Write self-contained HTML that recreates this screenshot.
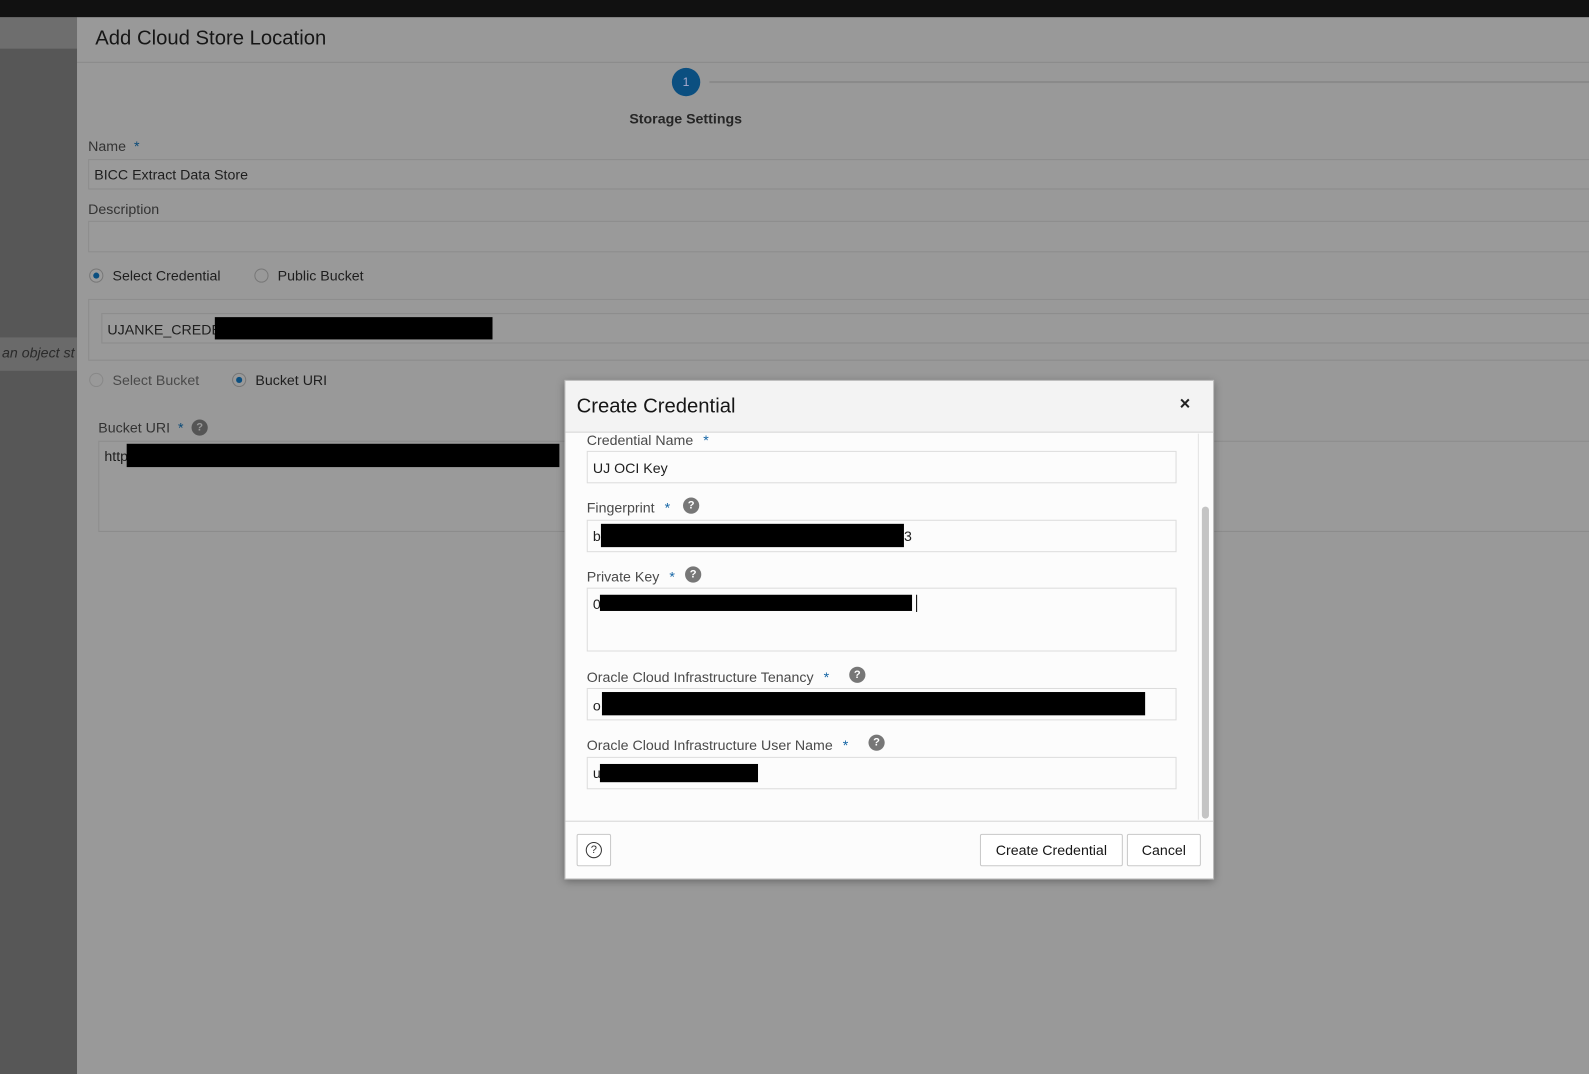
<!DOCTYPE html>
<html><head><meta charset="utf-8">
<style>
*{box-sizing:border-box;margin:0;padding:0}
html,body{width:1589px;height:1074px;overflow:hidden;background:#575757;font-family:"Liberation Sans",sans-serif}
#w{position:absolute;left:0;top:0;width:1568px;height:1060px;transform:scale(1.01339,1.01321);transform-origin:0 0;background:#575757}
.a{position:absolute}
.t{position:absolute;font-size:14px;color:#1e1e1e;white-space:nowrap}
.lbl{color:#333}
.inp{position:absolute;border:1px solid #8c8c8c;background:#9a9a9a}
.blk{position:absolute;background:#000}
.star{color:#0a4a78;font-size:14px;margin-left:4px}
.q{position:absolute;width:16px;height:16px;border-radius:50%;background:#555;color:#999;font-size:11px;font-weight:bold;text-align:center;line-height:16px}
.dq{background:#777;color:#fff}
.din{position:absolute;border:1px solid #dcdcdc;background:#fcfcfc}
.dl{position:absolute;font-size:14px;color:#4a4a4a;white-space:nowrap}
.ds{color:#1565a5;font-size:14px;margin-left:6px}
.btn{position:absolute;border:1px solid #c8c8c8;background:#fff;font-size:14px;color:#161616;text-align:center;line-height:30px;border-radius:2px}
</style></head><body><div id="w">
<div class="a" style="left:0;top:0;width:1568px;height:17px;background:#111"></div>
<div class="a" style="left:0;top:17px;width:76px;height:31px;background:#6e6e6e"></div>
<div class="a" style="left:0;top:333px;width:76px;height:33px;background:#6a6a6a;overflow:hidden"><div class="t" style="left:2px;top:7px;font-style:italic;color:#2a2a2a">an object st</div></div>
<div class="a" style="left:76px;top:17px;width:1492px;height:1043px;background:#999"></div>
<div class="t" style="left:94px;top:27px;font-size:20px;color:#161616">Add Cloud Store Location</div>
<div class="a" style="left:76px;top:61px;width:1492px;height:1px;background:#8a8a8a"></div>
<div class="a" style="left:700px;top:80px;width:868px;height:2px;background:#8a8a8a"></div>
<div class="a" style="left:663px;top:67px;width:28px;height:28px;border-radius:50%;background:#0b4f80;color:#aac;font-size:12px;text-align:center;line-height:28px">1</div>
<div class="t" style="left:621px;top:109px;font-weight:bold;color:#262626">Storage Settings</div>
<div class="t lbl" style="left:87px;top:136px">Name <span class="star">*</span></div>
<div class="inp" style="left:87px;top:157px;width:1490px;height:30px"></div>
<div class="t" style="left:93px;top:164px">BICC Extract Data Store</div>
<div class="t lbl" style="left:87px;top:198px">Description</div>
<div class="inp" style="left:87px;top:218px;width:1490px;height:31px"></div>
<div class="a" style="left:88px;top:265px;width:14px;height:14px;border-radius:50%;border:1px solid #777;background:#9c9c9c"></div>
<div class="a" style="left:92px;top:269px;width:6px;height:6px;border-radius:50%;background:#0b4f80"></div>
<div class="t" style="left:111px;top:264px">Select Credential</div>
<div class="a" style="left:251px;top:265px;width:14px;height:14px;border-radius:50%;border:1px solid #777"></div>
<div class="t" style="left:274px;top:264px">Public Bucket</div>
<div class="inp" style="left:87px;top:295px;width:1490px;height:61px;background:#999"></div>
<div class="inp" style="left:100px;top:309px;width:1480px;height:30px"></div>
<div class="t" style="left:106px;top:317px">UJANKE_CREDE</div>
<div class="blk" style="left:212px;top:313px;width:274px;height:22px"></div>
<div class="a" style="left:88px;top:368px;width:14px;height:14px;border-radius:50%;border:1px solid #888"></div>
<div class="t" style="left:111px;top:367px;color:#4a4a4a">Select Bucket</div>
<div class="a" style="left:229px;top:368px;width:14px;height:14px;border-radius:50%;border:1px solid #777"></div>
<div class="a" style="left:233px;top:372px;width:6px;height:6px;border-radius:50%;background:#0b4f80"></div>
<div class="t" style="left:252px;top:367px">Bucket URI</div>
<div class="t lbl" style="left:97px;top:414px">Bucket URI <span class="star">*</span></div>
<div class="q" style="left:189px;top:414px">?</div>
<div class="inp" style="left:97px;top:435px;width:1480px;height:90px"></div>
<div class="t" style="left:103px;top:442px">http</div>
<div class="blk" style="left:125px;top:438px;width:427px;height:23px"></div>

<div class="a" style="left:557px;top:375px;width:641px;height:493px;background:#fcfcfc;border:1px solid #bbb;box-shadow:0 2px 8px rgba(0,0,0,.35)"></div>
<div class="a" style="left:558px;top:376px;width:639px;height:51px;background:#f3f3f3;border-bottom:1px solid #d4d4d4"></div>
<div class="t" style="left:569px;top:390px;font-size:20px;color:#161616">Create Credential</div>
<div class="t" style="left:1164px;top:388px;font-size:18px;font-weight:bold;color:#222">×</div>
<div class="a" style="left:1182px;top:428px;width:1px;height:381px;background:#e2e2e2"></div>
<div class="a" style="left:1186px;top:500px;width:7px;height:308px;border-radius:4px;background:#c4c4c4"></div>
<div class="dl" style="left:579px;top:426px">Credential Name <span class="ds">*</span></div>
<div class="din" style="left:579px;top:445px;width:582px;height:32px"></div>
<div class="t" style="left:585px;top:454px">UJ OCI Key</div>
<div class="dl" style="left:579px;top:493px">Fingerprint <span class="ds">*</span></div>
<div class="q dq" style="left:674px;top:491px">?</div>
<div class="din" style="left:579px;top:513px;width:582px;height:32px"></div>
<div class="t" style="left:585px;top:521px">b</div>
<div class="blk" style="left:593px;top:517px;width:299px;height:23px"></div>
<div class="t" style="left:892px;top:521px">3</div>
<div class="dl" style="left:579px;top:561px">Private Key <span class="ds">*</span></div>
<div class="q dq" style="left:676px;top:559px">?</div>
<div class="din" style="left:579px;top:580px;width:582px;height:63px"></div>
<div class="t" style="left:585px;top:588px">0</div>
<div class="blk" style="left:592px;top:587px;width:308px;height:16px"></div>
<div class="a" style="left:904px;top:587px;width:1px;height:17px;background:#000"></div>
<div class="dl" style="left:579px;top:660px">Oracle Cloud Infrastructure Tenancy <span class="ds">*</span></div>
<div class="q dq" style="left:838px;top:658px">?</div>
<div class="din" style="left:579px;top:679px;width:582px;height:32px"></div>
<div class="t" style="left:585px;top:688px">o</div>
<div class="blk" style="left:594px;top:683px;width:536px;height:23px"></div>
<div class="dl" style="left:579px;top:727px">Oracle Cloud Infrastructure User Name <span class="ds">*</span></div>
<div class="q dq" style="left:857px;top:725px">?</div>
<div class="din" style="left:579px;top:747px;width:582px;height:32px"></div>
<div class="t" style="left:585px;top:755px">u</div>
<div class="blk" style="left:592px;top:754px;width:156px;height:18px"></div>
<div class="a" style="left:558px;top:810px;width:639px;height:1px;background:#d4d4d4"></div>
<div class="btn" style="left:569px;top:823px;width:34px;height:32px"></div>
<div class="a" style="left:578px;top:831px;width:16px;height:16px;border-radius:50%;border:1px solid #333;font-size:11px;text-align:center;line-height:14px;color:#333">?</div>
<div class="btn" style="left:967px;top:823px;width:141px;height:32px">Create Credential</div>
<div class="btn" style="left:1112px;top:823px;width:73px;height:32px">Cancel</div>
</div></body></html>
